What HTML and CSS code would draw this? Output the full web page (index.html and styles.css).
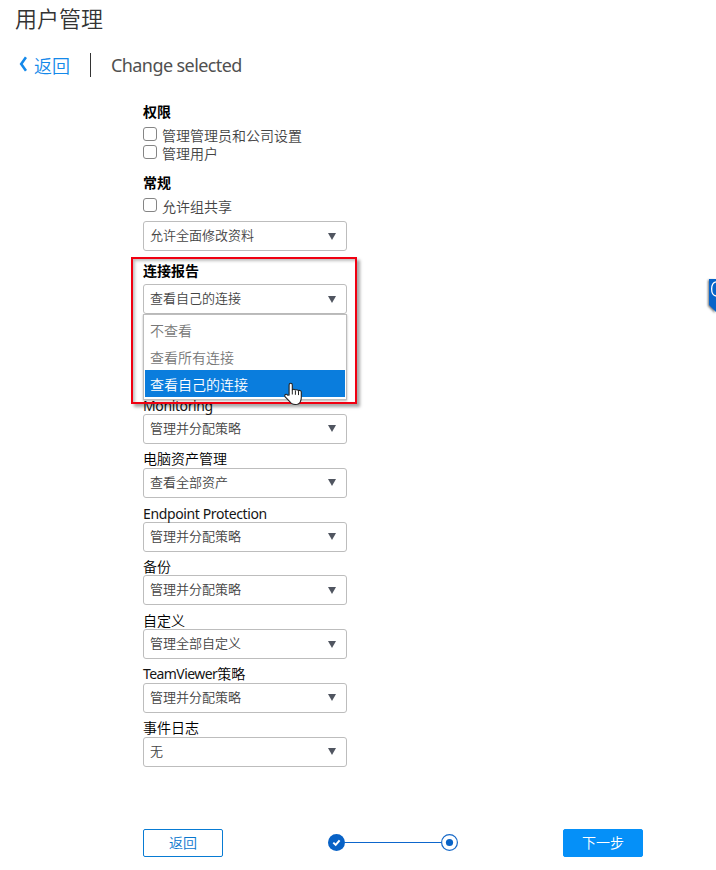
FILE: index.html
```html
<!DOCTYPE html>
<html lang="zh-CN">
<head>
<meta charset="utf-8">
<title>用户管理</title>
<link rel="stylesheet" href="styles.css">
</head>
<body>
<header class="header">
  <h1 class="title">用户管理</h1>
  <nav class="crumbs">
    <a class="back"><svg class="chevron" width="8" height="16" viewBox="0 0 8 16"><path d="M7 1.2 2.2 8 7 14.8" fill="none" stroke="#1489ea" stroke-width="2.6"/></svg><span>返回</span></a>
    <span class="current">Change selected</span>
  </nav>
</header>
<main class="form">
  <section class="rights">
    <h2 class="heading">权限</h2>
    <label class="check"><span class="box"></span><span class="check-text">管理管理员和公司设置</span></label>
    <label class="check"><span class="box"></span><span class="check-text">管理用户</span></label>
  </section>
  <section class="general">
    <h2 class="heading">常规</h2>
    <label class="check"><span class="box"></span><span class="check-text">允许组共享</span></label>
    <div class="select"><span>允许全面修改资料</span><i class="arrow"></i></div>
  </section>
  <section class="reports">
    <h2 class="heading">连接报告</h2>
    <div class="select"><span>查看自己的连接</span><i class="arrow"></i></div>
    <ul class="menu">
      <li class="option">不查看</li>
      <li class="option">查看所有连接</li>
      <li class="option selected">查看自己的连接</li>
    </ul>
    <div class="marker"></div>
    <svg class="pointer" width="20" height="25" viewBox="0 0 20 25"><path d="M5.1 13V3Q5.1 1.2 6.7 1.2T8.3 3v5.2q0-1 1.4-1t1.7 1.2q.2-.8 1.5-.7t1.6 1.3q.3-.8 1.5-.5t1.3 1.5v5.5q0 2-.8 3.8-1 3.2-5.2 3.2-4 0-5.8-3.2L1.2 15q-1-1.8.2-2.5 1.1-.6 2.3.7z" fill="#fff" stroke="#222" stroke-width="1.1"/><path d="M8.3 8v4.5M11.4 8.8v4M14.5 9.5v3.6" stroke="#222" stroke-width="1"/></svg>
  </section>
  <section class="fields">
    <div class="label label-latin"><span class="latin">Monitoring</span></div>
    <div class="select"><span>管理并分配策略</span><i class="arrow"></i></div>
    <div class="label">电脑资产管理</div>
    <div class="select"><span>查看全部资产</span><i class="arrow"></i></div>
    <div class="label label-latin"><span class="latin">Endpoint Protection</span></div>
    <div class="select"><span>管理并分配策略</span><i class="arrow"></i></div>
    <div class="label">备份</div>
    <div class="select"><span>管理并分配策略</span><i class="arrow"></i></div>
    <div class="label">自定义</div>
    <div class="select"><span>管理全部自定义</span><i class="arrow"></i></div>
    <div class="label"><span class="latin brand">TeamViewer</span>策略</div>
    <div class="select"><span>管理并分配策略</span><i class="arrow"></i></div>
    <div class="label">事件日志</div>
    <div class="select"><span>无</span><i class="arrow"></i></div>
  </section>
</main>
<footer class="footer">
  <button class="button">返回</button>
  <svg class="steps" width="131" height="18" viewBox="0 0 131 18"><path d="M17 8.5h97" stroke="#0d66cc" stroke-width="1"/><circle cx="8.5" cy="8.5" r="8.5" fill="#0862c6"/><path d="m5.3 8.6 2.4 2.3 3.9-4.6" fill="none" stroke="#fff" stroke-width="2"/><circle cx="121.5" cy="8.5" r="7.9" fill="#fff" stroke="#1769c8" stroke-width="1.2"/><circle cx="121.5" cy="8.5" r="3.6" fill="#0862c6"/></svg>
  <button class="button primary">下一步</button>
</footer>
<svg class="side-tab" width="9" height="39" viewBox="0 0 9 39"><path d="M2 4h7v33L2 30z" fill="#0864c9"/><path d="M9 6.8C3.2 8 3.2 20 9 21" fill="none" stroke="#fff" stroke-width="1.3"/></svg>
</body>
</html>
```
FILE: styles.css
```css
* { box-sizing: border-box; }
body {
  margin: 0;
  width: 716px;
  height: 870px;
  position: relative;
  overflow: hidden;
  background: #fff;
  color: #444;
  font: 14px/18px "Noto Sans CJK SC", sans-serif;
}
.header { height: 102px; padding: 1px 0 0 15px; }
.title { margin: 0; font-size: 22px; line-height: 32px; font-weight: 350; color: #333; }
.crumbs { display: flex; align-items: center; height: 24px; margin-top: 20px; }
.back {
  display: flex;
  align-items: center;
  gap: 7px;
  width: 76px;
  height: 24px;
  padding-left: 4px;
  border-right: 1px solid #333;
  color: #1489ea;
  font-size: 18px;
  font-weight: 350;
}
.chevron { margin-top: -2px; }
.current {
  margin: 0 0 0 20px;
  font-family: "Noto Sans", sans-serif;
  font-size: 18px;
  letter-spacing: -0.58px;
  color: #505050;
}
.form { width: 204px; margin-left: 143px; }
.heading { margin: 0; font-size: 14px; line-height: 18px; font-weight: 700; color: #000; }
.check { display: flex; align-items: flex-start; gap: 5px; height: 18px; }
.box { width: 14px; height: 14px; border: 1px solid #858585; border-radius: 3px; }
.check-text { line-height: 16px; font-weight: 350; color: #444; }
.rights { height: 71px; }
.rights .heading { height: 25px; }
.general { height: 88px; }
.general .heading { height: 25px; }
.general .check { height: 23px; }
.select {
  display: flex;
  align-items: center;
  justify-content: space-between;
  width: 204px;
  height: 30px;
  padding: 0 10px 2px 6px;
  border: 1px solid #bdbdbd;
  border-radius: 3px;
  background: #fff;
  font-size: 13px;
  font-weight: 350;
  color: #444;
}
.arrow {
  border: solid transparent;
  border-width: 7px 4px 0;
  border-top-color: #505560;
  margin-top: 2px;
}
.reports { position: relative; height: 129px; }
.reports .heading { height: 23px; }
.menu {
  position: absolute;
  left: 0;
  top: 53px;
  width: 204px;
  height: 86px;
  margin: 0;
  padding: 1px 1px 2px;
  list-style: none;
  border: 1px solid #bdbdbd;
  background: #fff;
  box-shadow: 0 1px 2px rgba(0, 0, 0, 0.3);
}
.option { height: 27px; padding-left: 5px; line-height: 28px; font-weight: 350; color: #777; }
.selected { background: #0a7ddd; color: #fff; }
.marker {
  position: absolute;
  left: -12px;
  top: -4px;
  width: 226px;
  height: 147px;
  border: 2px solid #f00011;
  box-shadow: 3px 3px 3px rgba(0, 0, 0, 0.35), inset 2px 2px 3px rgba(0, 0, 0, 0.25);
}
.pointer { position: absolute; left: 141px; top: 121px; }
.fields { padding-top: 0.15px; }
.label { height: 23.8px; padding-top: 5.2px; font-weight: 350; color: #000; white-space: nowrap; }
.label-latin { padding-top: 6px; }
.latin { font-family: "Noto Sans", sans-serif; font-weight: 400; letter-spacing: -0.38px; color: #151515; }
.brand { letter-spacing: -0.58px; }
.footer { display: flex; align-items: center; width: 500px; margin: 62px 0 0 143px; }
.button {
  width: 80px;
  height: 28px;
  padding: 0 0 2px;
  border: 1px solid #087bd3;
  border-radius: 2px;
  background: #fff;
  color: #0876ce;
  font: 350 14px/24px "Noto Sans CJK SC", sans-serif;
}
.steps { margin: 0 104px 0 105px; }
.primary { background: #0590f8; border-color: #0590f8; color: #fff; }
.side-tab {
  position: absolute;
  right: 0;
  top: 275px;
  filter: drop-shadow(-1px 1px 1px rgba(0, 0, 0, 0.55));
}
```
